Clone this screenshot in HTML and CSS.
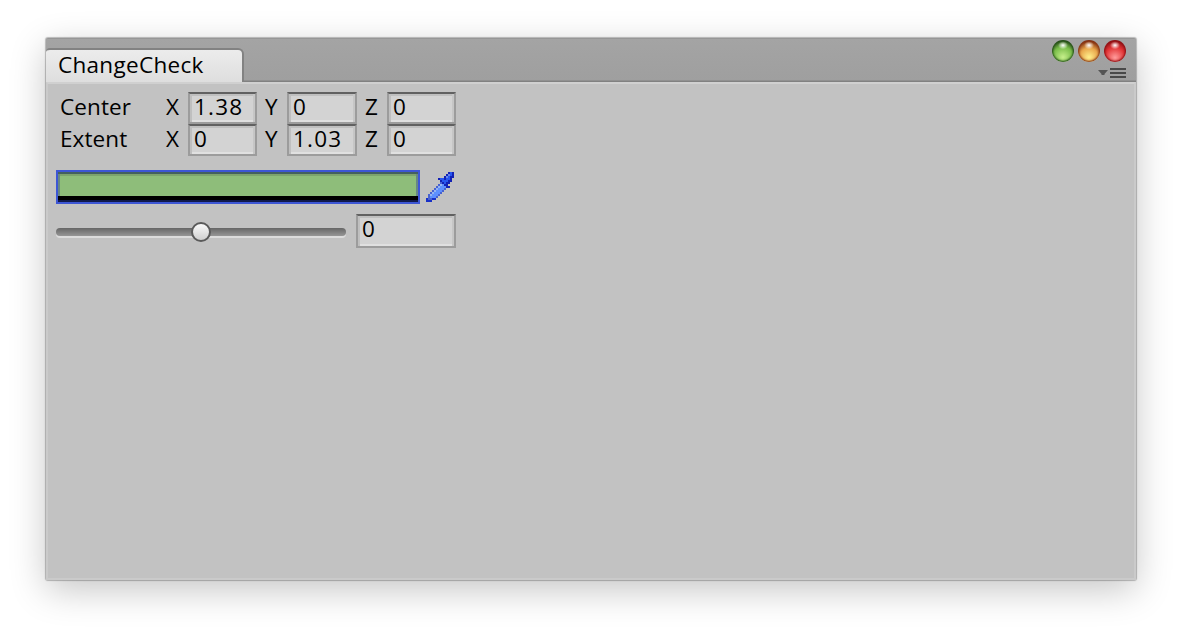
FILE: index.html
```html
<!DOCTYPE html>
<html lang="en">
<head>
<meta charset="utf-8">
<title>ChangeCheck</title>
<link rel="stylesheet" href="styles.css">
</head>
<body>
<main class="window">
  <header class="bar">
    <div class="tab"><span class="t tab-text">ChangeCheck</span></div>
    <div class="controls">
      <div class="lights">
        <i class="light green"></i><i class="light amber"></i><i class="light red"></i>
      </div>
      <svg class="menu" width="28" height="10" viewBox="0 0 28 10">
        <path d="M0 2h10l-3.5 4v1h-3v-1z" fill="#555"/>
        <path d="M12 0h16v2H12zM12 4h16v2H12zM12 8h16v2H12z" fill="#494949"/>
      </svg>
    </div>
  </header>
  <section class="content">
    <div class="bounds">
      <span class="t label">Center</span>
      <span class="t axis x">X</span><div class="field"><span class="t">1.38</span></div>
      <span class="t axis">Y</span><div class="field"><span class="t">0</span></div>
      <span class="t axis">Z</span><div class="field"><span class="t">0</span></div>
      <span class="t label">Extent</span>
      <span class="t axis x">X</span><div class="field"><span class="t">0</span></div>
      <span class="t axis">Y</span><div class="field"><span class="t">1.03</span></div>
      <span class="t axis">Z</span><div class="field"><span class="t">0</span></div>
    </div>
    <div class="color-row">
      <div class="swatch"><div class="alpha"></div></div>
      <svg class="dropper" width="30" height="32" viewBox="0 0 15 16" shape-rendering="crispEdges">
        <path d="M7 6h2v1h1v1h1v1h-1v1h-1v1h-1v1h-1v1h-1v1h-1v1h-2v1h-3v-2h1v-2h1v-1h1v-1h1v-1h1v-1h1v-1h1z" fill="#4862d0"/>
        <path d="M7 7h2v1h1v1h-1v1h-1v1h-1v1h-1v1h-1v1h-3v-2h1v-1h1v-1h1v-1h1v-1h1z" fill="#5d90ff"/>
        <path d="M7 7h1v1h-1v1h-1v1h-1v1h-1v1h-1v1h-1v-1h1v-1h1v-1h1v-1h1v-1h1z" fill="#94b4f4"/>
        <path d="M0 14h1v1h2v-1h2v1h-2v1h-3z" fill="#1830c8"/>
        <path d="M6 4h3v-1h1v-1h1v-1h3v3h-1v2h-1v1h-1v1h1v1h-2v-1h-1v-1h-1v-1h-1v-1h-1z" fill="#1221b5"/>
        <path d="M7 4h2v1h1v-2h1v-1h1v-1h1v2h-1v2h-1v1h-1v1h-1v-1h-1v-1h-1z" fill="#2655ef"/>
        <path d="M10 3h1v-1h1v1h-1v1h-1z" fill="#6688ed"/>
      </svg>
    </div>
    <div class="slider-row">
      <div class="track"><div class="thumb"></div></div>
      <div class="field wide"><span class="t">0</span></div>
    </div>
  </section>
</main>
</body>
</html>
```
FILE: styles.css
```css
* { box-sizing: border-box; }
body {
  margin: 0;
  padding: 38px 46px 54px;
  height: 634px;
  background: #fff;
  overflow: hidden;
  font-family: "Open Sans", sans-serif;
}
.window {
  display: flex;
  flex-direction: column;
  height: 542px;
  background: #c2c2c2;
  border-radius: 2px;
  box-shadow: 0 0 1px 1px #00000040, 0 10px 36px #0000003a;
}
.bar {
  display: flex;
  justify-content: space-between;
  align-items: flex-end;
  height: 44px;
  background: linear-gradient(#a4a4a4, #9f9f9f 41px, #818181 42px);
  border-top: 1px solid #969696;
  border-radius: 2px 2px 0 0;
}
.tab {
  width: 198px;
  height: 34px;
  padding-left: 12px;
  background: linear-gradient(#ececec, #dedede);
  border-top: 2px solid #828282;
  border-right: 2px solid #828282;
  border-radius: 4px 6px 0 0;
}
.t {
  display: block;
  color: #000;
  font-size: 22.5px;
  line-height: 30px;
  white-space: nowrap;
}
.tab-text { letter-spacing: .3px; }
.controls {
  align-self: flex-start;
  display: flex;
  flex-direction: column;
  align-items: flex-end;
  gap: 6px;
  padding: 1px 10px 0 0;
}
.lights { display: flex; gap: 4px; }
.light {
  width: 22px;
  height: 22px;
  border-radius: 50%;
}
.green {
  background: radial-gradient(ellipse 5px 4px at 50% 24%, #fff, #fff0), radial-gradient(circle at 50% 78%, #c6ef8b, #79bd49 50%, #17350f 88%);
  box-shadow: inset 0 0 2px 1px #245018;
}
.amber {
  background: radial-gradient(ellipse 5px 4px at 50% 24%, #fff, #fff0), radial-gradient(circle at 50% 78%, #fff08c, #e9a84d 45%, #792209 82%);
  box-shadow: inset 0 0 2px 1px #873716;
}
.red {
  background: radial-gradient(ellipse 5px 4px at 50% 24%, #fff, #fff0), radial-gradient(circle at 50% 80%, #ff9c9c, #e23435 50%, #750509 92%);
  box-shadow: inset 0 0 2px 1px #8d1013;
}
.content {
  flex: 1;
  padding: 8px 11px 0 8px;
  border: 2px solid #cacaca;
  border-top-color: #d0d0d0;
}
.bounds {
  display: grid;
  grid-template-columns: 106px 26px 69px 30px 70px 30px 69px;
  grid-auto-rows: 32px;
}
.label { padding-left: 4px; letter-spacing: .1px; }
.axis { padding-left: 8px; }
.axis.x { padding-left: 4px; }
.field {
  height: 32px;
  padding-left: 4px;
  background: #d3d3d3;
  border: 2px solid #9c9c9c;
  border-top-color: #616161;
  box-shadow: inset 2px 0 #bfbfbf, inset -2px 0 #c6c6c6, inset 0 2px #bfbfbf, inset 0 -2px #e0e0e0;
}
.field .t { line-height: 26px; letter-spacing: 1.2px; }
.color-row {
  display: flex;
  gap: 6px;
  margin-top: 14px;
}
.swatch {
  display: flex;
  flex-direction: column;
  justify-content: flex-end;
  width: 364px;
  height: 34px;
  background: #8ebd7a;
  border: 2px solid #3d56d5;
  box-shadow: inset 0 2px #44605f, inset 2px 0 #678883, inset -2px 0 #678883, inset 0 4px #7da36d;
}
.alpha { height: 6px; background: #000; border-bottom: 2px solid #10194a; }
.slider-row {
  display: flex;
  align-items: center;
  gap: 10px;
  margin-top: 10px;
}
.track {
  display: flex;
  align-items: center;
  justify-content: center;
  width: 290px;
  height: 8px;
  margin-top: 2px;
  background: linear-gradient(#666, #969696);
  border-radius: 4px;
  box-shadow: 0 2px #dcdcdc;
}
.thumb {
  flex: none;
  width: 20px;
  height: 20px;
  background: linear-gradient(#fafafa, #cfcfcf);
  border: 2px solid #5a5a5a;
  border-radius: 50%;
}
.wide { width: 100px; height: 34px; }
```
